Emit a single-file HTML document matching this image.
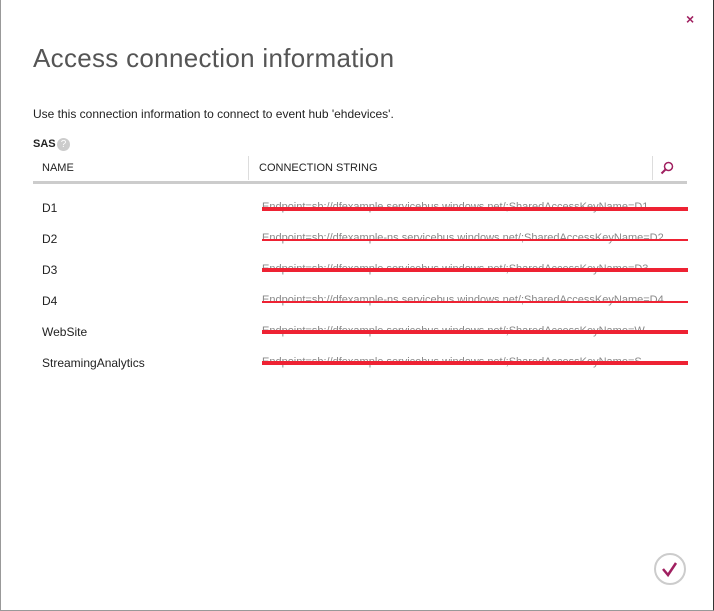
<!DOCTYPE html>
<html><head><style>
body{margin:0;width:714px;height:611px;background:#fff;font-family:"Liberation Sans",sans-serif;position:relative;overflow:hidden}
.b{position:absolute;left:0;top:0;width:712px;height:610px;border-left:1px solid #999;border-right:2px solid #333;border-bottom:1px solid #999}
.a{position:absolute;white-space:nowrap}
h1{position:absolute;left:33px;top:43px;margin:0;font-weight:normal;font-size:26px;color:#555;letter-spacing:0.3px}
.row{position:absolute;left:42px;font-size:12px;color:#222}
.cs{position:absolute;left:262px;font-size:11px;color:#888;width:426px;overflow:hidden;white-space:nowrap}
.red{position:absolute;left:262px;width:426px;height:4px;background:#ee2233}
</style></head><body>
<div class="b"></div>
<div class="a" style="left:686px;top:11px;font-size:14px;color:#a02060;font-weight:bold">×</div>
<h1>Access connection information</h1>
<div class="a" style="left:33px;top:107px;font-size:12px;color:#222">Use this connection information to connect to event hub 'ehdevices'.</div>
<div class="a" style="left:33px;top:138px;font-size:11px;font-weight:bold;color:#222">SAS</div>
<div class="a" style="left:57px;top:138px;width:13px;height:13px;border-radius:50%;background:#ccc;color:#fff;font-size:10px;text-align:center;line-height:13px">?</div>
<div class="a" style="left:42px;top:162px;font-size:11px;color:#222">NAME</div>
<div class="a" style="left:248px;top:156px;width:1px;height:24px;background:#ddd"></div>
<div class="a" style="left:259px;top:162px;font-size:11px;color:#222">CONNECTION STRING</div>
<div class="a" style="left:652px;top:156px;width:1px;height:24px;background:#ddd"></div>
<svg class="a" style="left:660px;top:161px" width="14" height="14"><circle cx="8.5" cy="5.5" r="4" fill="none" stroke="#a02060" stroke-width="1.5"/><line x1="5.5" y1="8.5" x2="1.5" y2="12.5" stroke="#a02060" stroke-width="2"/></svg>
<div class="a" style="left:33px;top:181px;width:654px;height:3px;background:#ccc"></div>

<div class="row" style="top:201px">D1</div><div class="cs" style="top:201px">Endpoint=sb://dfexample.servicebus.windows.net/;SharedAccessKeyName=D1</div><div class="red" style="top:207px"></div>
<div class="row" style="top:232px">D2</div><div class="cs" style="top:232px">Endpoint=sb://dfexample-ns.servicebus.windows.net/;SharedAccessKeyName=D2</div><div class="red" style="top:239px;height:2px"></div>
<div class="row" style="top:263px">D3</div><div class="cs" style="top:263px">Endpoint=sb://dfexample.servicebus.windows.net/;SharedAccessKeyName=D3</div><div class="red" style="top:268px"></div>
<div class="row" style="top:294px">D4</div><div class="cs" style="top:294px">Endpoint=sb://dfexample-ns.servicebus.windows.net/;SharedAccessKeyName=D4</div><div class="red" style="top:301px;height:2px"></div>
<div class="row" style="top:325px">WebSite</div><div class="cs" style="top:325px">Endpoint=sb://dfexample.servicebus.windows.net/;SharedAccessKeyName=W</div><div class="red" style="top:330px"></div>
<div class="row" style="top:356px">StreamingAnalytics</div><div class="cs" style="top:356px">Endpoint=sb://dfexample.servicebus.windows.net/;SharedAccessKeyName=S</div><div class="red" style="top:361px"></div>

<svg class="a" style="left:653px;top:552px" width="34" height="34"><circle cx="17" cy="17" r="15" fill="none" stroke="#ccc" stroke-width="2"/><path d="M10 17 L15 23 L23 11" fill="none" stroke="#a02060" stroke-width="2.5"/></svg>
</body></html>
